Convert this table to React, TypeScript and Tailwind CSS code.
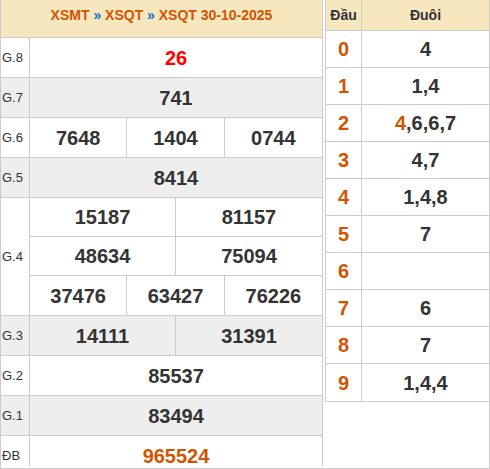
import clsx from 'clsx'

type Prize = { label: string; rows: string[][]; tone?: 'red'; grey?: boolean }

const PRIZES: Prize[] = [
  { label: 'G.8', rows: [['26']], tone: 'red' },
  { label: 'G.7', rows: [['741']], grey: true },
  { label: 'G.6', rows: [['7648', '1404', '0744']] },
  { label: 'G.5', rows: [['8414']], grey: true },
  { label: 'G.4', rows: [['15187', '81157'], ['48634', '75094'], ['37476', '63427', '76226']] },
  { label: 'G.3', rows: [['14111', '31391']], grey: true },
  { label: 'G.2', rows: [['85537']] },
  { label: 'G.1', rows: [['83494']], grey: true },
]

const COLS: Record<number, string> = {
  1: 'grid-cols-1',
  2: 'grid-cols-2',
  3: 'grid-cols-3',
}

// đầu / đuôi, hot = đuôi trùng giải đặc biệt
const LOTO: { head: string; hot?: string; tail: string }[] = [
  { head: '0', tail: '4' },
  { head: '1', tail: '1,4' },
  { head: '2', hot: '4', tail: ',6,6,7' },
  { head: '3', tail: '4,7' },
  { head: '4', tail: '1,4,8' },
  { head: '5', tail: '7' },
  { head: '6', tail: '' },
  { head: '7', tail: '6' },
  { head: '8', tail: '7' },
  { head: '9', tail: '1,4,4' },
]

function PrizeRow({ p }: { p: Prize }) {
  return (
    <div className={clsx('flex border-b border-[#ccc]', p.grey ? 'bg-[#eeeeee]' : 'bg-white')}>
      <div className="w-[29px] shrink-0 border-r border-[#ccc] flex items-center pl-px text-[13px] text-[#333]">
        {p.label}
      </div>
      <div className="flex-1 flex flex-col">
        {p.rows.map((row, i) => (
          <div
            key={i}
            className={clsx('h-[39px] grid', COLS[row.length], i < p.rows.length - 1 && 'border-b border-[#ccc]')}
          >
            {row.map((n, j) => (
              <div
                key={j}
                className={clsx(
                  'flex items-center justify-center text-[20px] font-bold',
                  j < row.length - 1 && 'border-r border-[#ccc]',
                  p.tone === 'red' ? 'text-[#ff0000]' : 'text-[#333]'
                )}
              >
                {n}
              </div>
            ))}
          </div>
        ))}
      </div>
    </div>
  )
}

export default function App() {
  return (
    <div className="w-[490px] h-[469px] flex items-start bg-white border-l border-r border-b border-[#ccc] font-[family-name:'Liberation_Sans',Arial,sans-serif] overflow-hidden">
      {/* Kết quả */}
      <div className="w-[322px] shrink-0 border-r border-[#ccc]">
        <div className="h-[38px] bg-[#f6e7bf] border-b border-[#ccc] flex items-center justify-center pb-[6px] text-[14px] font-bold text-[#d35400] whitespace-pre">
          XSMT <span className="text-[#1a6fc4]">»</span> XSQT <span className="text-[#1a6fc4]">»</span> XSQT 30-10-2025
        </div>
        {PRIZES.map((p) => (
          <PrizeRow key={p.label} p={p} />
        ))}
        <div className="h-[30px] overflow-hidden bg-white">
          <div className="h-[39px] flex">
            <div className="w-[29px] shrink-0 border-r border-[#ccc] flex items-center pl-px text-[13px] text-[#333]">
              ĐB
            </div>
            <div className="flex-1 flex items-center justify-center text-[20px] font-bold text-[#d35400]">
              965524
            </div>
          </div>
        </div>
      </div>

      {/* Lô tô */}
      <div className="flex-1 ml-[2px] border-l border-b border-[#ccc]">
        <div className="h-[31px] flex bg-[#f6e7bf] border-b border-[#ccc] text-[14px] font-bold text-[#333]">
          <div className="w-[36px] shrink-0 border-r border-[#ccc] flex items-center justify-center">Đầu</div>
          <div className="flex-1 flex items-center justify-center">Đuôi</div>
        </div>
        {LOTO.map((r, i) => (
          <div key={r.head} className={clsx('h-[37px] flex', i < LOTO.length - 1 && 'border-b border-[#ccc]')}>
            <div className="w-[36px] shrink-0 border-r border-[#ccc] flex items-center justify-center text-[20px] font-bold text-[#d35400]">
              {r.head}
            </div>
            <div className="flex-1 flex items-center justify-center text-[20px] font-bold text-[#333]">
              {r.hot && <span className="text-[#d35400]">{r.hot}</span>}
              {r.tail}
            </div>
          </div>
        ))}
      </div>
    </div>
  )
}
